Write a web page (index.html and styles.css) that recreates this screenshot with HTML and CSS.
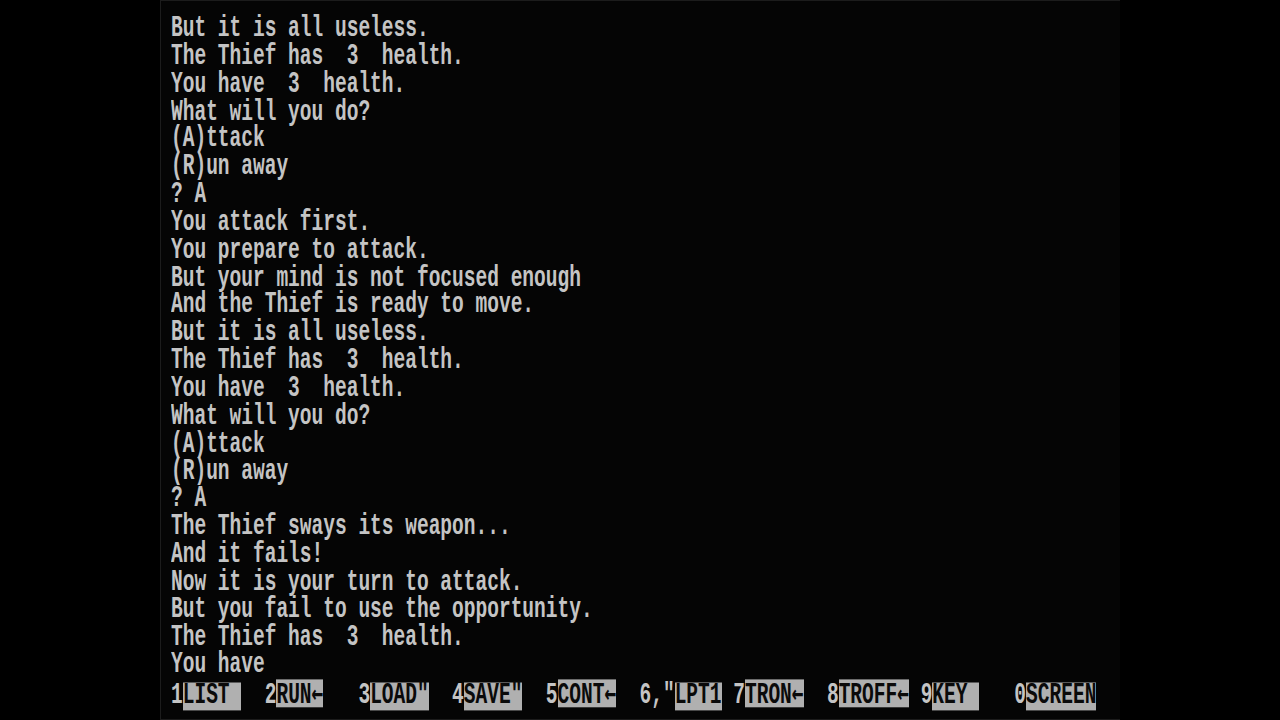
FILE: index.html
```html
<!DOCTYPE html>
<html lang="en">
<head>
<meta charset="utf-8">
<title>GW-BASIC</title>
<link rel="stylesheet" href="styles.css">
</head>
<body>
<div class="screen">
  <div class="rows">
    <div class="row">But it is all useless.</div>
    <div class="row">The Thief has  3  health.</div>
    <div class="row">You have  3  health.</div>
    <div class="row">What will you do?</div>
    <div class="row">(A)ttack</div>
    <div class="row">(R)un away</div>
    <div class="row">? A</div>
    <div class="row">You attack first.</div>
    <div class="row">You prepare to attack.</div>
    <div class="row">But your mind is not focused enough</div>
    <div class="row">And the Thief is ready to move.</div>
    <div class="row">But it is all useless.</div>
    <div class="row">The Thief has  3  health.</div>
    <div class="row">You have  3  health.</div>
    <div class="row">What will you do?</div>
    <div class="row">(A)ttack</div>
    <div class="row">(R)un away</div>
    <div class="row">? A</div>
    <div class="row">The Thief sways its weapon...</div>
    <div class="row">And it fails!</div>
    <div class="row">Now it is your turn to attack.</div>
    <div class="row">But you fail to use the opportunity.</div>
    <div class="row">The Thief has  3  health.</div>
    <div class="row">You have</div>
    <div class="row keys">1<span class="hl">LIST </span>  2<span class="hl">RUN<span class="arr">←</span></span>   3<span class="hl">LOAD"</span>  4<span class="hl">SAVE"</span>  5<span class="hl">CONT<span class="arr">←</span></span>  6,"<span class="hl">LPT1</span> 7<span class="hl">TRON<span class="arr">←</span></span>  8<span class="hl">TROFF<span class="arr">←</span></span> 9<span class="hl">KEY </span>   0<span class="hl">SCREEN</span> </div>
  </div>
</div>
</body>
</html>
```

FILE: styles.css
```css
html, body {
  margin: 0;
  padding: 0;
  background: #000;
}

body {
  width: 1280px;
  height: 720px;
  overflow: hidden;
}

.screen {
  box-sizing: border-box;
  width: 960px;
  height: 720px;
  margin: 0 auto;
  background: #050505;
  border-left: 1px solid #1c1c1c;
  border-top: 1px solid #1c1c1c;
  border-bottom: 1px solid #1c1c1c;
  padding: 15px 0 0 10px;
  overflow: hidden;
}

.rows {
  transform: scaleY(1.55);
  transform-origin: 0 0;
  font-family: "Liberation Mono", "DejaVu Sans Mono", monospace;
  font-weight: bold;
  font-size: 19.53px;
  color: #c4c4c4;
}

.row {
  height: 17.85px;
  line-height: 17.85px;
  white-space: pre;
}

.hl {
  display: inline-block;
  height: 17.85px;
  background: #b0b0b0;
  color: #0a0a0a;
}

.arr {
  font-family: "DejaVu Sans Mono", monospace;
  font-weight: bold;
  font-size: 19.46px;
}
```
